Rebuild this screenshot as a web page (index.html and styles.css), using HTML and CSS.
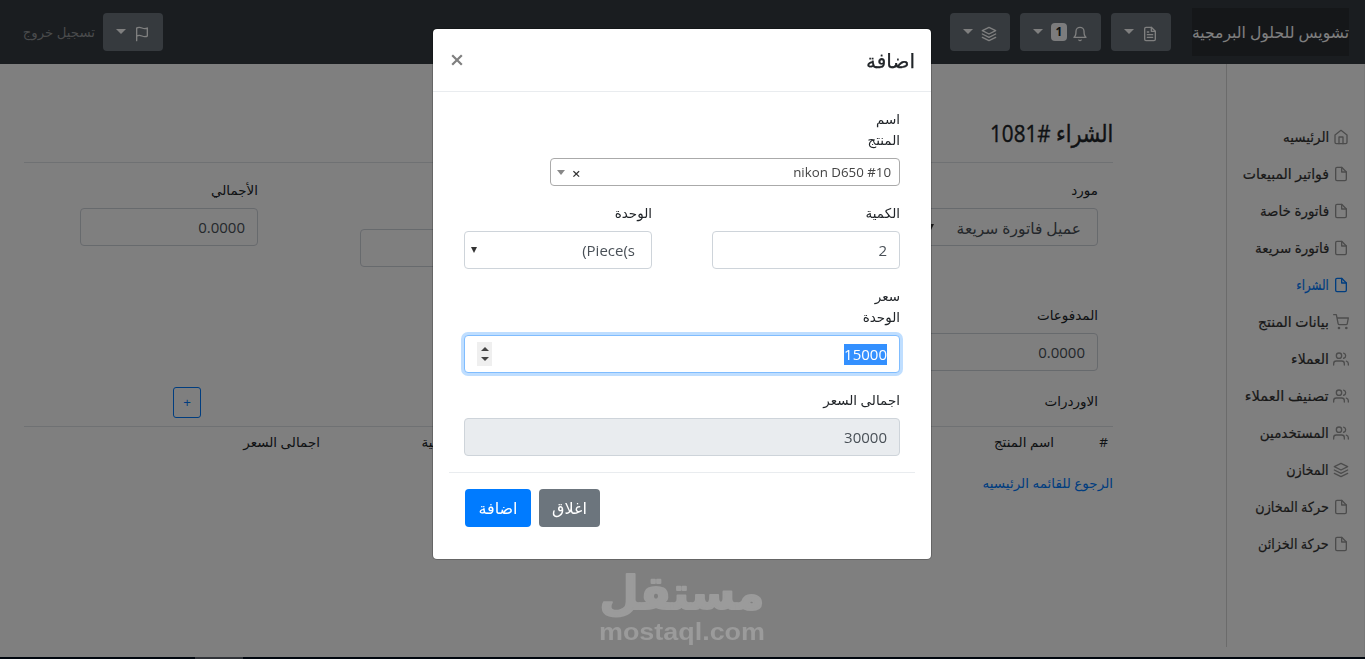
FILE: index.html
```html
<!DOCTYPE html>
<html lang="ar" dir="rtl">
<head>
<meta charset="utf-8">
<title>الشراء</title>
<link rel="stylesheet" href="styles.css">
</head>
<body>
<svg class="sprite" aria-hidden="true">
  <symbol id="home" viewBox="0 0 24 24"><path d="M3 9l9-7 9 7v11a2 2 0 0 1-2 2H5a2 2 0 0 1-2-2z"/><path d="M9 22V12h6v10"/></symbol>
  <symbol id="file" viewBox="0 0 24 24"><path d="M13 2H6a2 2 0 0 0-2 2v16a2 2 0 0 0 2 2h12a2 2 0 0 0 2-2V9z"/><path d="M13 2v7h7"/></symbol>
  <symbol id="file-text" viewBox="0 0 24 24"><path d="M14 2H6a2 2 0 0 0-2 2v16a2 2 0 0 0 2 2h12a2 2 0 0 0 2-2V8z"/><path d="M14 2v6h6M16 13H8M16 17H8M10 9H8"/></symbol>
  <symbol id="cart" viewBox="0 0 24 24"><circle cx="9" cy="21" r="1"/><circle cx="20" cy="21" r="1"/><path d="M1 1h4l2.68 13.39a2 2 0 0 0 2 1.61h9.72a2 2 0 0 0 2-1.61L23 6H6"/></symbol>
  <symbol id="users" viewBox="0 0 24 24"><path d="M17 21v-2a4 4 0 0 0-4-4H5a4 4 0 0 0-4 4v2"/><circle cx="9" cy="7" r="4"/><path d="M23 21v-2a4 4 0 0 0-3-3.87M16 3.13a4 4 0 0 1 0 7.75"/></symbol>
  <symbol id="layers" viewBox="0 0 24 24"><path d="M12 2L2 7l10 5 10-5-10-5z"/><path d="M2 17l10 5 10-5M2 12l10 5 10-5"/></symbol>
  <symbol id="bell" viewBox="0 0 24 24"><path d="M18 8A6 6 0 0 0 6 8c0 7-3 9-3 9h18s-3-2-3-9M13.73 21a2 2 0 0 1-3.46 0"/></symbol>
  <symbol id="flag" viewBox="0 0 24 24"><path d="M4 15s1-1 4-1 5 2 8 2 4-1 4-1V3s-1 1-4 1-5-2-8-2-4 1-4 1zM4 22v-7"/></symbol>
</svg>

<div class="page">
  <header class="navbar">
    <div class="brand"><span>تشويس للحلول البرمجية</span></div>
    <div class="tools">
      <button class="tool"><svg class="icon"><use href="#file-text"/></svg><i class="caret"></i></button>
      <button class="tool tool-bell"><svg class="icon"><use href="#bell"/></svg><span class="badge">1</span><i class="caret"></i></button>
      <button class="tool"><svg class="icon"><use href="#layers"/></svg><i class="caret"></i></button>
    </div>
    <button class="tool tool-flag"><svg class="icon"><use href="#flag"/></svg><i class="caret"></i></button>
    <a class="signout">تسجيل خروج</a>
  </header>

  <div class="body">
    <nav class="sidebar">
      <a class="nav-link"><svg class="icon"><use href="#home"/></svg><span class="snug">الرئيسيه</span></a>
      <a class="nav-link"><svg class="icon"><use href="#file"/></svg><span>فواتير المبيعات</span></a>
      <a class="nav-link"><svg class="icon"><use href="#file"/></svg><span class="snug">فاتورة خاصة</span></a>
      <a class="nav-link"><svg class="icon"><use href="#file"/></svg><span class="snug">فاتورة سريعة</span></a>
      <a class="nav-link active"><svg class="icon"><use href="#file"/></svg><span class="narrow">الشراء</span></a>
      <a class="nav-link"><svg class="icon"><use href="#cart"/></svg><span>بيانات المنتج</span></a>
      <a class="nav-link"><svg class="icon"><use href="#users"/></svg><span>العملاء</span></a>
      <a class="nav-link"><svg class="icon"><use href="#users"/></svg><span class="wide">تصنيف العملاء</span></a>
      <a class="nav-link"><svg class="icon"><use href="#users"/></svg><span class="snug">المستخدمين</span></a>
      <a class="nav-link"><svg class="icon"><use href="#layers"/></svg><span class="tight">المخازن</span></a>
      <a class="nav-link"><svg class="icon"><use href="#file"/></svg><span class="tight">حركة المخازن</span></a>
      <a class="nav-link"><svg class="icon"><use href="#file"/></svg><span class="tight">حركة الخزائن</span></a>
    </nav>

    <main class="main">
      <h1 class="title"><span>الشراء #1081</span></h1>
      <div class="fields">
        <div class="field"><label>مورد</label><div class="control select supplier"><span>عميل فاتورة سريعة</span><i class="arrow"></i></div></div>
        <div></div>
        <div class="field field-low"><div class="control"></div></div>
        <div class="field"><label>الأجمالي</label><div class="control num">0.0000</div></div>
      </div>
      <div class="fields fields-second">
        <div class="field"><label>المدفوعات</label><div class="control num">0.0000</div></div>
      </div>
      <div class="orders"><label>الاوردرات</label><button class="add">+</button></div>
      <div class="thead"><span>#</span><span>اسم المنتج</span><span>الكمية</span><span>اجمالى السعر</span></div>
      <a class="back">الرجوع للقائمه الرئيسيه</a>
    </main>
  </div>
  <div class="taskbar"><div class="task"></div></div>
</div>

<div class="backdrop"></div>

<svg class="watermark" viewBox="0 0 200 92">
  <text class="wm-ar" x="99" y="52" text-anchor="middle" textLength="165" lengthAdjust="spacingAndGlyphs">مستقل</text>
  <text class="wm-en" x="99" y="83" text-anchor="middle" direction="ltr" textLength="166" lengthAdjust="spacingAndGlyphs">mostaql.com</text>
</svg>

<section class="modal">
  <div class="modal-head"><h2>اضافة</h2><button class="close" aria-label="اغلاق"><svg viewBox="0 0 12 12"><path d="M1.2 1.2l9.6 9.6M10.8 1.2l-9.6 9.6"/></svg></button></div>
  <div class="modal-body">
    <div class="field"><label>اسم<br>المنتج</label>
      <div class="product"><span>nikon D650 #10</span><b>×</b><i class="product-caret"></i></div></div>
    <div class="pair">
      <div class="field"><label>الكمية</label><div class="control num">2</div></div>
      <div class="field"><label>الوحدة</label><div class="control select num"><span><bdi dir="ltr">Piece(s</bdi>)</span><i class="arrow"></i></div></div>
    </div>
    <div class="field"><label>سعر<br>الوحدة</label>
      <div class="control num focus"><span class="sel">15000</span><span class="spin"><i class="up"></i><i class="down"></i></span></div></div>
    <div class="field"><label>اجمالى السعر</label><div class="control num readonly">30000</div></div>
  </div>
  <div class="modal-foot"><button class="btn grey">اغلاق</button><button class="btn blue">اضافة</button></div>
</section>
</body>
</html>
```
FILE: styles.css
```css
* { box-sizing: border-box; }
body {
  margin: 0;
  background: #fff;
  color: #212529;
  font-family: "Open Sans", "DejaVu Sans", sans-serif;
  font-size: 13.5px;
  line-height: 21px;
  overflow: hidden;
}
button { font: inherit; border: 0; padding: 0; }
label { display: block; }
.sprite { display: none; }
.icon { width: 16px; height: 16px; fill: none; stroke: currentColor; stroke-width: 2; stroke-linecap: round; stroke-linejoin: round; flex: none; }

.page { height: 659px; display: flex; flex-direction: column; }
.navbar { height: 64px; flex: none; display: flex; align-items: center; background: #343a40; padding: 0 16px 0 23px; }
.brand { width: 157px; height: 48px; line-height: 48px; background: #2a2e33; color: #fff; font-size: 15.6px; white-space: nowrap; }
.tools { display: flex; gap: 10px; margin-right: 21px; flex: 1; }
.tool { width: 60px; height: 38px; border-radius: 4px; background: #6c757d; color: #fff; display: flex; align-items: center; justify-content: flex-start; padding: 2px 13px 0; gap: 7px; }
.tool-bell { width: 81px; }
.tool .icon { margin-top: 2px; }
.tool .caret { margin-right: auto; margin-top: -4px; border: 5px solid transparent; border-top-color: #fff; border-bottom: 0; }
.badge { width: 16px; height: 18px; margin-top: -2px; border-radius: 4px; background: #f8f9fa; color: #212529; font-size: 12px; font-weight: 700; line-height: 18px; text-align: center; margin-right: -2px; }
.signout { width: 72px; margin-right: 8px; color: #939699; font-size: 13.3px; white-space: nowrap; }

.body { flex: 1; display: flex; min-height: 0; border-right: 1px solid #f0f0f0; }
.sidebar { width: 138px; height: 583px; border-left: 1px solid #d6d6d6; padding: 54px 15px 0 0; }
.nav-link { display: flex; align-items: center; height: 37px; gap: 4px; color: #333; white-space: nowrap; font-size: 14px; -webkit-text-stroke: .2px currentColor; }
.nav-link span { transform-origin: right; }
.wide { transform: scaleX(1.04); }
.snug { transform: scaleX(.96); }
.tight { transform: scaleX(.91); }
.narrow { transform: scaleX(.84); }
.nav-link .icon { color: #999; }
.active, .active .icon { color: #007bff; }

.main { flex: 1; padding: 51px 113px 0 24px; }
.title { margin: 0; height: 48px; line-height: 36px; font-size: 24px; font-weight: 500; border-bottom: 1px solid #dee2e6; white-space: nowrap; }
.title span { display: inline-block; transform: scaleX(.86); transform-origin: right; -webkit-text-stroke: .4px currentColor; }
.fields { display: grid; grid-template-columns: repeat(4, 178px); gap: 102px; padding: 16px 15px 0 0; }
.fields-second { padding-top: 37px; }
.field label { padding-top: 1px; margin-bottom: 7px; }
.field-low { padding-top: 50px; }
.control { height: 38px; border: 1px solid #ced4da; border-radius: 4px; padding: 0 12px; line-height: 36px; color: #495057; background: #fff; }
.num { font-size: 15px; }
.select { display: flex; align-items: center; justify-content: space-between; padding: 0 16px 0 6px; white-space: nowrap; font-size: 15px; }
.arrow { border: 3px solid transparent; border-top: 6px solid #333; border-bottom: 0; }
.supplier { font-size: 15.5px; padding-left: 7px; }
.supplier span { padding-top: 1px; }
.orders { height: 55px; display: flex; justify-content: space-between; align-items: flex-start; padding: 16px 15px 0 149px; }
.orders label { padding-top: 4px; }
.add { width: 28px; height: 31px; border: 1px solid #007bff; border-radius: 3px; background: transparent; color: #007bff; }
.thead { display: grid; grid-template-columns: 54px 598px 136px 1fr; border-top: 1px solid #dee2e6; padding: 5px 5px 20px 0; }
.back { color: #007bff; }
.taskbar { height: 2px; background: #000c1c; padding-right: 1122px; }
.task { width: 48px; height: 2px; background: #606670; }
.backdrop { position: fixed; inset: 0; background: rgba(0, 0, 0, .5); }

.watermark { position: absolute; left: 583px; top: 557px; width: 200px; height: 92px; fill: #9b9b9b; overflow: visible; }
.wm-ar { font: 700 46px "DejaVu Sans", sans-serif; stroke: #9b9b9b; stroke-width: 2; stroke-linejoin: round; }
.wm-en { font: 700 23px "Liberation Sans", sans-serif; }

.modal { position: absolute; left: 432px; top: 28px; width: 500px; height: 532px; background: #fff; background-clip: padding-box; border: 1px solid rgba(0, 0, 0, .2); border-radius: 5px; }
.modal-head { height: 63px; border-bottom: 1px solid #e9ecef; display: flex; align-items: center; justify-content: space-between; padding: 0 16px 0 18px; }
.modal-head h2 { margin: 0; font-size: 20px; font-weight: 500; -webkit-text-stroke: .25px currentColor; }
.close { background: none; width: 12px; height: 12px; }
.close svg { display: block; width: 12px; height: 12px; stroke: #7f7f7f; stroke-width: 2.2; }
.modal-body { margin: 0 16px; padding: 16px 15px 16px; border-bottom: 1px solid #e9ecef; }
.product { width: 350px; height: 28px; border: 1px solid #aaa; border-radius: 4px; color: #444; display: flex; align-items: center; padding: 1px 8px 0 6px; font-size: 13.3px; }
.product b { margin-right: auto; margin-top: 2px; color: #333; font-size: 15px; font-weight: 600; }
.product-caret { border: 4px solid transparent; border-top: 5px solid #888; border-bottom: 0; margin-right: 7px; }
.pair { display: grid; grid-template-columns: 188px 188px; gap: 60px; margin: 16px 0; }
.focus { display: flex; align-items: center; justify-content: space-between; border-color: #80bdff; box-shadow: 0 0 0 3px #bfdeff; margin-bottom: 16px; height: 38px; }
.sel { background: #3390ff; color: #fff; line-height: 21px; }
.spin { width: 15px; height: 24px; background: #efefef; display: flex; flex-direction: column; align-items: center; justify-content: space-evenly; }
.up, .down { border: 4px solid transparent; }
.up { border-bottom-color: #444; border-top: 0; }
.down { border-top-color: #444; border-bottom: 0; }
.readonly { background: #e9ecef; }
.modal-foot { display: flex; justify-content: flex-end; gap: 8px; padding: 16px 0 0 32px; }
.btn { height: 38px; border-radius: 4px; color: #fff; font-size: 16px; }
.grey { width: 61px; background: #6c757d; }
.blue { width: 66px; background: #007bff; }
```
